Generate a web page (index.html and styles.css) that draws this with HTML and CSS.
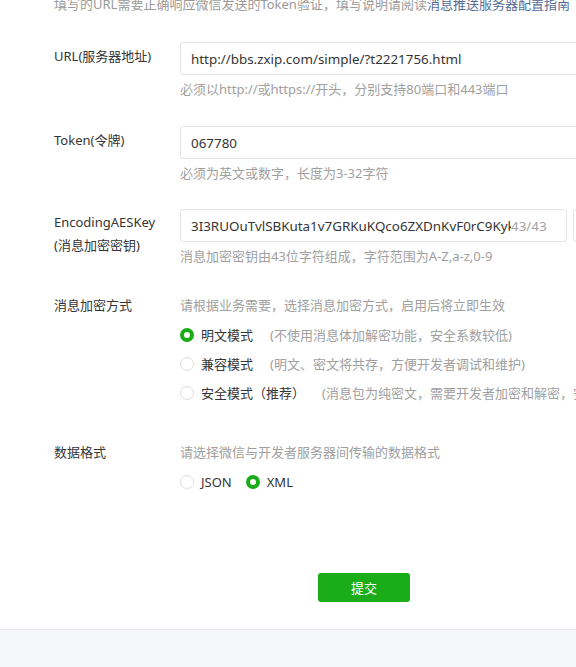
FILE: index.html
```html
<!DOCTYPE html>
<html lang="zh-CN">
<head>
<meta charset="utf-8">
<title>服务器配置</title>
<link rel="stylesheet" href="styles.css">
</head>
<body>
<div class="page">
  <main class="main">
    <p class="intro">填写的URL需要正确响应微信发送的Token验证，填写说明请阅读<a class="link" href="#">消息推送服务器配置指南</a></p>

    <div class="row row-first">
      <div class="label">URL(服务器地址)</div>
      <div class="field">
        <div class="input input-wide"><span class="value">http://bbs.zxip.com/simple/?t2221756.html</span></div>
        <p class="hint">必须以http://或https://开头，分别支持80端口和443端口</p>
      </div>
    </div>

    <div class="row row-token">
      <div class="label">Token(令牌)</div>
      <div class="field">
        <div class="input input-wide"><span class="value">067780</span></div>
        <p class="hint">必须为英文或数字，长度为3-32字符</p>
      </div>
    </div>

    <div class="row row-aes">
      <div class="label label-two">EncodingAESKey<br>(消息加密密钥)</div>
      <div class="field">
        <div class="key-line">
          <div class="input input-key">
            <span class="value value-clip">3I3RUOuTvlSBKuta1v7GRKuKQco6ZXDnKvF0rC9Kyk</span>
            <span class="counter">43/43</span>
          </div>
          <button class="btn-plain" type="button">随机生成</button>
        </div>
        <p class="hint">消息加密密钥由43位字符组成，字符范围为A-Z,a-z,0-9</p>
      </div>
    </div>

    <div class="row row-enc">
      <div class="label label-tall">消息加密方式</div>
      <div class="field">
        <p class="desc">请根据业务需要，选择消息加密方式，启用后将立即生效</p>
        <div class="option"><span class="radio radio-on"></span><span class="opt-name">明文模式</span><span class="opt-note">(不使用消息体加解密功能，安全系数较低)</span></div>
        <div class="option"><span class="radio"></span><span class="opt-name">兼容模式</span><span class="opt-note">(明文、密文将共存，方便开发者调试和维护)</span></div>
        <div class="option"><span class="radio"></span><span class="opt-name">安全模式（推荐）</span><span class="opt-note">(消息包为纯密文，需要开发者加密和解密，安全系数高)</span></div>
      </div>
    </div>

    <div class="row row-format">
      <div class="label label-tall">数据格式</div>
      <div class="field">
        <p class="desc">请选择微信与开发者服务器间传输的数据格式</p>
        <div class="option option-inline">
          <span class="choice"><span class="radio"></span><span class="opt-name">JSON</span></span>
          <span class="choice"><span class="radio radio-on"></span><span class="opt-name">XML</span></span>
        </div>
      </div>
    </div>

    <div class="actions">
      <button class="btn-primary" type="button">提交</button>
    </div>
  </main>
  <footer class="foot"></footer>
</div>
</body>
</html>
```

FILE: styles.css
```css
html, body {
  margin: 0;
  padding: 0;
  overflow: hidden;
  background: #ffffff;
}

body {
  font-family: "Noto Sans", "Noto Sans CJK SC", sans-serif;
  font-size: 13px;
  color: #353535;
}

.page {
  width: 728px;
}

.main {
  padding-left: 54px;
  padding-bottom: 27px;
}

.intro {
  margin: -6px 0 0;
  line-height: 20px;
  color: #9a9a9a;
  white-space: nowrap;
}

.link {
  color: #576b95;
  text-decoration: none;
}

.row {
  display: flex;
  margin-top: 27px;
}

.row-first { margin-top: 28px; }
.row-token { margin-top: 27px; }
.row-aes { margin-top: 26px; }
.row-enc { margin-top: 25px; }
.row-format { margin-top: 31px; }

.label {
  flex: none;
  width: 126px;
  line-height: 22px;
  padding-top: 3px;
  color: #353535;
}

.label-two {
  line-height: 23px;
  padding-top: 2px;
}

.label-tall {
  line-height: 29px;
  padding-top: 0;
}

.field {
  flex: none;
}

.input {
  box-sizing: border-box;
  height: 33px;
  border: 1px solid #e4e4e8;
  border-radius: 3px;
  padding: 0 10px;
  display: flex;
  align-items: center;
  background: #fff;
  font-size: 13.4px;
  color: #353535;
  white-space: nowrap;
}

.input-wide {
  width: 440px;
}

.key-line {
  display: flex;
  gap: 6px;
}

.input-key {
  width: 387px;
  padding-right: 14px;
}

.value-clip {
  flex: 1;
  overflow: hidden;
  min-width: 0;
}

.counter {
  flex: none;
  width: 41px;
  color: #a3a3a3;
}

.btn-plain {
  flex: none;
  box-sizing: border-box;
  width: 96px;
  height: 33px;
  border: 1px solid #e4e4e8;
  border-radius: 3px;
  background: #fff;
  font: inherit;
  color: #353535;
}

.hint {
  margin: 4px 0 0;
  line-height: 20px;
  color: #a0a0a0;
  white-space: nowrap;
}

.desc {
  margin: 0;
  line-height: 29px;
  color: #a0a0a0;
  white-space: nowrap;
}

.option {
  display: flex;
  align-items: center;
  height: 29px;
  white-space: nowrap;
}

.option-inline {
  gap: 14px;
}

.choice {
  display: flex;
  align-items: center;
}

.radio {
  box-sizing: border-box;
  flex: none;
  width: 14px;
  height: 14px;
  border-radius: 50%;
  border: 1px solid #dedede;
  background: #fff;
}

.radio-on {
  border: 4px solid #1aad19;
}

.opt-name {
  margin-left: 7px;
  color: #353535;
}

.opt-note {
  margin-left: 17px;
  color: #a0a0a0;
}

.actions {
  display: flex;
  justify-content: center;
  margin-top: 77px;
  padding-right: 54px;
}

.btn-primary {
  box-sizing: border-box;
  width: 92px;
  height: 29px;
  border: 0;
  border-radius: 3px;
  background: #1aad19;
  color: #ffffff;
  font: inherit;
  font-size: 13px;
}

.foot {
  border-top: 1px solid #e7e7eb;
  background: #f6f7f9;
  height: 120px;
}
```
